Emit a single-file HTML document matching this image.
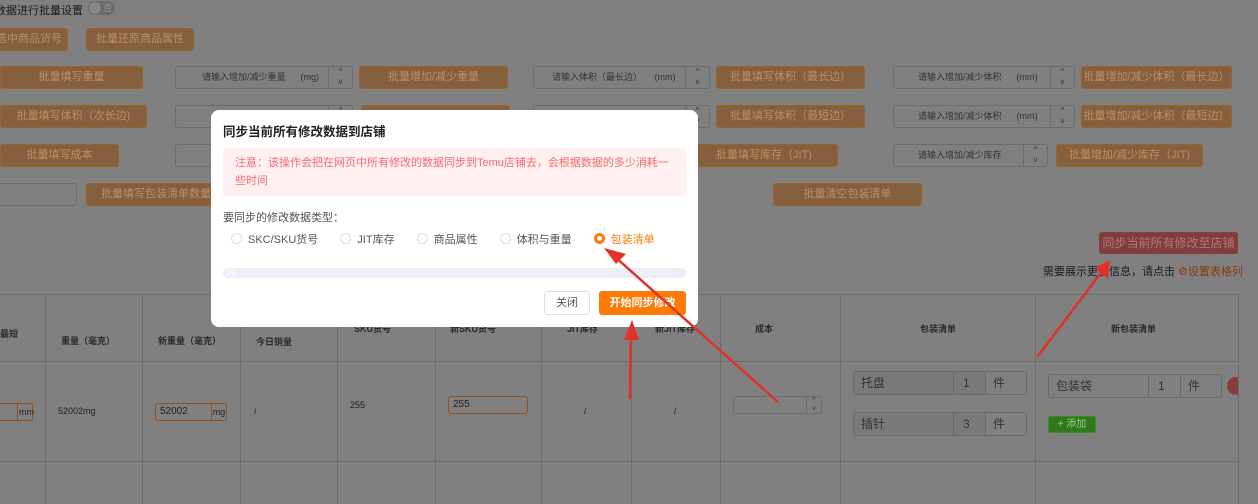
<!DOCTYPE html>
<html><head><meta charset="utf-8"><style>
*{box-sizing:border-box;margin:0;padding:0}
body{width:1258px;height:504px;overflow:hidden;background:#808080;font-family:"Liberation Sans","Noto Sans CJK SC",sans-serif;position:relative;color:#222}
.a{position:absolute}
.ob{position:absolute;background:#865f3e;border:1px solid #9a6426;border-radius:3px;color:#b99068;font-size:11px;text-align:center;line-height:21px;white-space:nowrap;overflow:hidden}
.in{position:absolute;border:1px solid #6c6c6c;border-radius:3px;font-size:9px;color:#333;line-height:21px;white-space:nowrap;overflow:hidden}
.sp{position:absolute;right:0;top:0;bottom:0;width:24px;border-left:1px solid #6c6c6c;font-size:8px;line-height:10px;text-align:center;color:#333}
.vl{position:absolute;top:294px;height:210px;width:1px;background:#6c6c6c}
.hl{position:absolute;left:0;width:1238px;height:1px;background:#6c6c6c}
.th{position:absolute;font-size:9px;font-weight:bold;color:#2a2a2a;white-space:nowrap}
.td{position:absolute;font-size:9px;color:#222;white-space:nowrap}
.box{position:absolute;border:1px solid #6a6a6a;border-radius:3px;background:#7a7a7a;font-size:12px;color:#333;line-height:22px;overflow:hidden}
.box i{font-style:normal;position:absolute;top:0;height:22px;border-left:1px solid #6a6a6a;background:#808080}
.radio{display:inline-block;width:11px;height:11px;border:1px solid #dcdfe6;border-radius:50%;vertical-align:-1px;margin-right:6px}
</style></head><body>
<div class="a" style="left:-5px;top:2px;font-size:11px;color:#1a1a1a">数据进行批量设置</div>
<div class="a" style="left:88px;top:1px;width:27px;height:14px;border-radius:7px;background:#6a6a6a"><div style="position:absolute;left:1px;top:1px;width:12px;height:12px;border-radius:50%;background:#888"></div><span style="position:absolute;left:15px;top:0;font-size:9px;color:#999">否</span></div>

<div class="ob" style="left:-10px;top:28px;width:78px;height:23px">选中商品货号</div>
<div class="ob" style="left:86px;top:28px;width:108px;height:23px">批量还原商品属性</div>

<div class="ob" style="left:0;top:66px;width:143px;height:23px">批量填写重量</div>
<div class="in" style="left:175px;top:66px;width:178px;height:23px;padding-left:26px">请输入增加/减少重量 &nbsp; &nbsp; &nbsp;(mg)<div class="sp">^<br>v</div></div>
<div class="ob" style="left:359px;top:66px;width:149px;height:23px">批量增加/减少重量</div>
<div class="in" style="left:533px;top:66px;width:177px;height:23px;padding-left:18px">请输入体积（最长边） &nbsp; &nbsp; (mm)<div class="sp">^<br>v</div></div>
<div class="ob" style="left:716px;top:66px;width:149px;height:23px">批量填写体积（最长边）</div>
<div class="in" style="left:893px;top:66px;width:182px;height:23px;padding-left:24px">请输入增加/减少体积 &nbsp; &nbsp; &nbsp;(mm)<div class="sp">^<br>v</div></div>
<div class="ob" style="left:1081px;top:66px;width:151px;height:23px">批量增加/减少体积（最长边）</div>

<div class="ob" style="left:0;top:105px;width:147px;height:23px">批量填写体积（次长边)</div>
<div class="in" style="left:175px;top:105px;width:178px;height:23px"><div class="sp">^<br>v</div></div>
<div class="ob" style="left:361px;top:105px;width:149px;height:23px"></div>
<div class="in" style="left:533px;top:105px;width:177px;height:23px"><div class="sp">^<br>v</div></div>
<div class="ob" style="left:716px;top:105px;width:149px;height:23px">批量填写体积（最短边）</div>
<div class="in" style="left:893px;top:105px;width:182px;height:23px;padding-left:24px">请输入增加/减少体积 &nbsp; &nbsp; &nbsp;(mm)<div class="sp">^<br>v</div></div>
<div class="ob" style="left:1081px;top:105px;width:151px;height:23px">批量增加/减少体积（最短边）</div>

<div class="ob" style="left:0;top:144px;width:119px;height:23px">批量填写成本</div>
<div class="in" style="left:175px;top:144px;width:178px;height:23px"></div>
<div class="ob" style="left:690px;top:144px;width:148px;height:23px">批量填写库存（JIT)</div>
<div class="in" style="left:893px;top:144px;width:155px;height:23px;padding-left:24px">请输入增加/减少库存<div class="sp">^<br>v</div></div>
<div class="ob" style="left:1056px;top:144px;width:147px;height:23px">批量增加/减少库存（JIT)</div>

<div class="in" style="left:-5px;top:183px;width:82px;height:23px"></div>
<div class="ob" style="left:86px;top:183px;width:140px;height:23px">批量填写包装清单数量</div>
<div class="ob" style="left:773px;top:183px;width:149px;height:23px">批量清空包装清单</div>

<div class="ob" style="left:1099px;top:232px;width:139px;height:22px;background:#7f3e3e;border-color:#8e3c3c;color:#b07878;font-size:12px">同步当前所有修改至店铺</div>
<div class="a" style="left:1043px;top:263px;font-size:11px;color:#1a1a1a">需要展示更多信息，请点击 <span style="color:#8a3a10">⚙设置表格列</span></div>

<div class="hl" style="top:294px"></div>
<div class="hl" style="top:361px"></div>
<div class="hl" style="top:461px"></div>
<div class="vl" style="left:45px"></div><div class="vl" style="left:142px"></div><div class="vl" style="left:240px"></div><div class="vl" style="left:337px"></div><div class="vl" style="left:435px"></div><div class="vl" style="left:541px"></div><div class="vl" style="left:631px"></div><div class="vl" style="left:720px"></div><div class="vl" style="left:840px"></div><div class="vl" style="left:1035px"></div><div class="vl" style="left:1238px"></div>

<div class="th" style="left:0;top:327px">最短</div>
<div class="th" style="left:61px;top:334px">重量（毫克）</div>
<div class="th" style="left:158px;top:334px">新重量（毫克）</div>
<div class="th" style="left:256px;top:335px">今日销量</div>
<div class="th" style="left:354px;top:322px">SKU货号</div>
<div class="th" style="left:450px;top:322px">新SKU货号</div>
<div class="th" style="left:567px;top:322px">JIT库存</div>
<div class="th" style="left:655px;top:322px">新JIT库存</div>
<div class="th" style="left:755px;top:322px">成本</div>
<div class="th" style="left:920px;top:322px">包装清单</div>
<div class="th" style="left:1111px;top:322px">新包装清单</div>

<div class="a" style="left:-5px;top:403px;width:38px;height:18px;border:1px solid #9a5010;border-radius:3px;font-size:9px;line-height:16px"><span style="position:absolute;left:21px;border-left:1px solid #9a5010;padding-left:1px">mm</span></div>
<div class="td" style="left:58px;top:406px">52002mg</div>
<div class="a" style="left:155px;top:403px;width:72px;height:18px;border:1px solid #9a5010;border-radius:3px;font-size:10px;line-height:16px;padding-left:4px">52002<span style="position:absolute;right:0;top:0;width:15px;border-left:1px solid #9a5010;font-size:9px;text-align:center">mg</span></div>
<div class="td" style="left:254px;top:406px">/</div>
<div class="td" style="left:350px;top:400px">255</div>
<div class="a" style="left:448px;top:396px;width:80px;height:18px;border:1px solid #9a5010;border-radius:3px;font-size:10px;line-height:16px;padding-left:4px">255</div>
<div class="td" style="left:584px;top:406px">/</div>
<div class="td" style="left:674px;top:406px">/</div>
<div class="in" style="left:733px;top:396px;width:89px;height:18px"><div class="sp" style="width:15px;font-size:7px;line-height:8px">^<br>v</div></div>

<div class="box" style="left:853px;top:371px;width:174px;height:24px;padding-left:7px">托盘<i style="left:99px;width:32px;padding-left:9px;background:#7a7a7a">1</i><i style="left:131px;width:43px;padding-left:7px">件</i></div>
<div class="box" style="left:853px;top:412px;width:174px;height:24px;padding-left:7px">插针<i style="left:99px;width:32px;padding-left:9px;background:#7a7a7a">3</i><i style="left:131px;width:43px;padding-left:7px">件</i></div>
<div class="box" style="left:1048px;top:374px;width:174px;height:24px;padding-left:7px;background:#808080">包装袋<i style="left:99px;width:32px;padding-left:9px">1</i><i style="left:131px;width:43px;padding-left:7px">件</i></div>
<div class="a" style="left:1048px;top:416px;width:48px;height:17px;background:#2f7a1a;border:1px solid #3d8a22;border-radius:2px;color:#a0c890;font-size:10px;line-height:15px;text-align:center">+ 添加</div>
<div class="a" style="left:1227px;top:377px;width:11px;height:18px;overflow:hidden"><div style="width:18px;height:18px;border-radius:50%;background:#8a3b3b"></div></div>

<div class="a" style="left:211px;top:110px;width:487px;height:217px;background:#fff;border-radius:8px">
<div class="a" style="left:12px;top:11px;font-size:12.5px;font-weight:bold;color:#222">同步当前所有修改数据到店铺</div>
<div class="a" style="left:12px;top:38px;width:463px;height:48px;background:#fef0f0;border-radius:4px;color:#f56c6c;font-size:11px;line-height:18px;padding:6px 12px">注意：该操作会把在网页中所有修改的数据同步到Temu店铺去，会根据数据的多少消耗一些时间</div>
<div class="a" style="left:12px;top:99px;font-size:11px;color:#555">要同步的修改数据类型：</div>
<div class="a" style="left:20px;top:121px;font-size:11px;color:#555;white-space:nowrap">
<span class="radio"></span>SKC/SKU货号<span style="display:inline-block;width:22px"></span><span class="radio"></span>JIT库存<span style="display:inline-block;width:22px"></span><span class="radio"></span>商品属性<span style="display:inline-block;width:22px"></span><span class="radio"></span>体积与重量<span style="display:inline-block;width:22px"></span><span class="radio" style="border:3px solid #fe7a06;width:11px;height:11px"></span><span style="color:#fe7a06">包装清单</span></div>
<div class="a" style="left:12px;top:158px;width:463px;height:10px;background:#ebeef5;border-radius:5px;font-size:8px;color:#fff;line-height:10px;padding-left:3px">0%</div>
<div class="a" style="left:333px;top:181px;width:46px;height:24px;border:1px solid #dcdfe6;border-radius:3px;font-size:11px;color:#555;text-align:center;line-height:22px">关闭</div>
<div class="a" style="left:388px;top:181px;width:87px;height:24px;background:#fe7a06;border-radius:3px;font-size:11px;color:#fff;text-align:center;line-height:24px;font-weight:bold">开始同步修改</div>
</div>

<svg class="a" style="left:0;top:0" width="1258" height="504">
<g stroke="#e03228" stroke-width="2.5" fill="#e03228" stroke-linecap="round">
<line x1="614" y1="256" x2="778" y2="402"/>
<polygon points="604,248 626,254 616,264" stroke="none"/>
<line x1="631" y1="330" x2="630" y2="398"/>
<polygon points="632,320 624,340 639,340" stroke="none"/>
<line x1="1103" y1="270" x2="1038" y2="356"/>
<polygon points="1110,260 1095,268 1108,279" stroke="none"/>
</g>
</svg>
</body></html>
